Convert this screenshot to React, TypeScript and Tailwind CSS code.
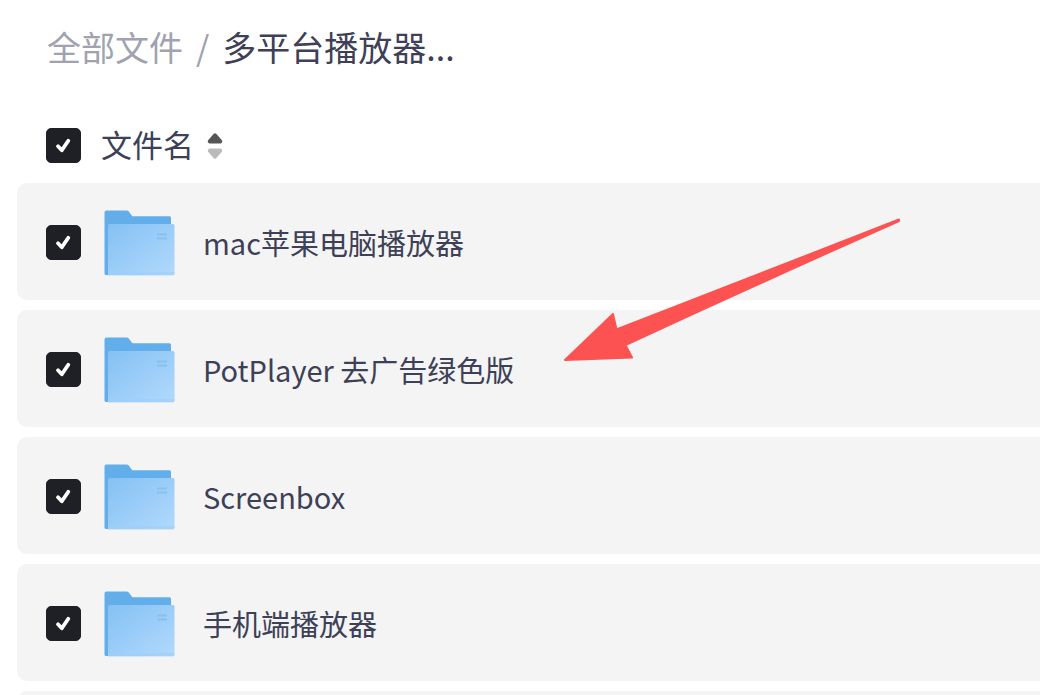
import { useState } from "react";

const files = [
  { id: 1, name: "mac苹果电脑播放器" },
  { id: 2, name: "PotPlayer 去广告绿色版" },
  { id: 3, name: "Screenbox" },
  { id: 4, name: "手机端播放器" },
];

interface CheckboxProps {
  label: string;
  checked: boolean;
  onChange: (checked: boolean) => void;
}

function Checkbox({ label, checked, onChange }: CheckboxProps) {
  return (
    <label className="grid size-[35px] cursor-pointer">
      <input
        type="checkbox"
        aria-label={label}
        checked={checked}
        onChange={(e) => onChange(e.target.checked)}
        className="col-start-1 row-start-1 size-full appearance-none rounded-[5px] border border-[#1f2025] bg-white checked:bg-[#1f2025]"
      />
      {checked && (
        <svg viewBox="0 0 35 35" className="pointer-events-none z-10 col-start-1 row-start-1 size-full" aria-hidden="true">
          <path
            d="M12 18.3L15.8 22.3L22.3 12.7"
            fill="none"
            stroke="#fff"
            strokeWidth="3.8"
            strokeLinecap="round"
            strokeLinejoin="round"
          />
        </svg>
      )}
    </label>
  );
}

function FolderIcon() {
  return (
    <svg viewBox="0 0 71 66" className="h-[66px] w-[71px] shrink-0" aria-hidden="true">
      <defs>
        <linearGradient id="folder-front" x1="0" y1="0" x2="1" y2="1">
          <stop offset="0" stopColor="#84c1f3" />
          <stop offset="0.5" stopColor="#9bcdf8" />
          <stop offset="1" stopColor="#b1d9fc" />
        </linearGradient>
      </defs>
      <path
        d="M2.5 0.5H22.5Q24 0.5 25 1.8L28.3 6.3H65.5Q67 6.3 67 7.8V65H2Q0.5 65 0.5 63.5V2.5Q0.5 0.5 2.5 0.5Z"
        fill="#62aeea"
      />
      <path d="M5.5 14H69Q70.5 14 70.5 15.5V63.5Q70.5 65.3 69 65.3H4V15.5Q4 14 5.5 14Z" fill="url(#folder-front)" />
      <path d="M4 62H70.5V63.5Q70.5 65.3 69 65.3H4Z" fill="#9ccff9" opacity="0.6" />
      <path d="M53 24.5H63M53 28.5H63" stroke="#86c1f2" strokeWidth="2" />
    </svg>
  );
}

function SortIcon() {
  return (
    <svg viewBox="0 0 16 26" className="h-[26px] w-4" aria-hidden="true">
      <path d="M6.8 0.8Q8 -0.2 9.2 0.8L14.9 7.2Q16 9.4 13.5 10.5H2.5Q0 9.4 1.1 7.2Z" fill="#555" />
      <path d="M6.8 25.2Q8 26.2 9.2 25.2L14.9 18.8Q16 16.6 13.5 15.5H2.5Q0 16.6 1.1 18.8Z" fill="#bbb" />
    </svg>
  );
}

export default function App() {
  const [selected, setSelected] = useState<number[]>(files.map((f) => f.id));

  const toggle = (id: number, checked: boolean) => {
    setSelected(checked ? [...selected, id] : selected.filter((s) => s !== id));
  };

  return (
    <main className="relative h-screen overflow-hidden bg-white pl-[17px] font-['Noto_Sans_CJK_SC',sans-serif] text-[#3d4056]">
      <nav aria-label="路径" className="flex gap-[13px] pt-[22px] pb-9 pl-[30px] text-[34px] leading-[50px]">
        <a href="#" className="text-[#a0a2af]">全部文件</a>
        <span className="text-[#a0a2af]">/</span>
        <span>多平台播放器...</span>
      </nav>

      <table className="w-full border-separate border-spacing-x-0 border-spacing-y-[10px]">
        <thead>
          <tr>
            <th className="h-[55px] w-16 p-0 pl-[29px]">
              <Checkbox
                label="全选"
                checked={selected.length === files.length}
                onChange={(checked) => setSelected(checked ? files.map((f) => f.id) : [])}
              />
            </th>
            <th className="p-0 pl-5 text-left font-normal">
              <button className="flex cursor-pointer items-center gap-[13px] text-[31px] leading-10">
                <span className="pb-1">文件名</span>
                <SortIcon />
              </button>
            </th>
          </tr>
        </thead>
        <tbody>
          {files.map((file) => (
            <tr key={file.id}>
              <td className="h-[117px] rounded-l-[10px] bg-[#f4f4f4] p-0 pt-0.5 pl-[29px]">
                <Checkbox
                  label={file.name}
                  checked={selected.includes(file.id)}
                  onChange={(checked) => toggle(file.id, checked)}
                />
              </td>
              <td className="bg-[#f4f4f4] p-0 pt-0.5 pl-[23px]">
                <div className="flex items-center gap-7">
                  <FolderIcon />
                  <span className="pb-0.5 text-[29px] leading-10">{file.name}</span>
                </div>
              </td>
            </tr>
          ))}
          <tr aria-hidden="true">
            <td colSpan={2} className="h-[117px] rounded-l-[10px] bg-[#f4f4f4]" />
          </tr>
        </tbody>
      </table>

      {/* annotation arrow pointing at the PotPlayer folder */}
      <svg
        viewBox="0 0 340 146"
        className="pointer-events-none absolute top-[217px] left-[562px] h-[146px] w-[340px]"
        aria-hidden="true"
      >
        <path
          d="M3 143L51 97L54.5 112.5Q196 57 337 2.5V4Q200 65 63.5 128L70 140.5Z"
          fill="#fc5352"
          stroke="#fc5352"
          strokeWidth="2"
          strokeLinejoin="round"
        />
      </svg>
    </main>
  );
}
